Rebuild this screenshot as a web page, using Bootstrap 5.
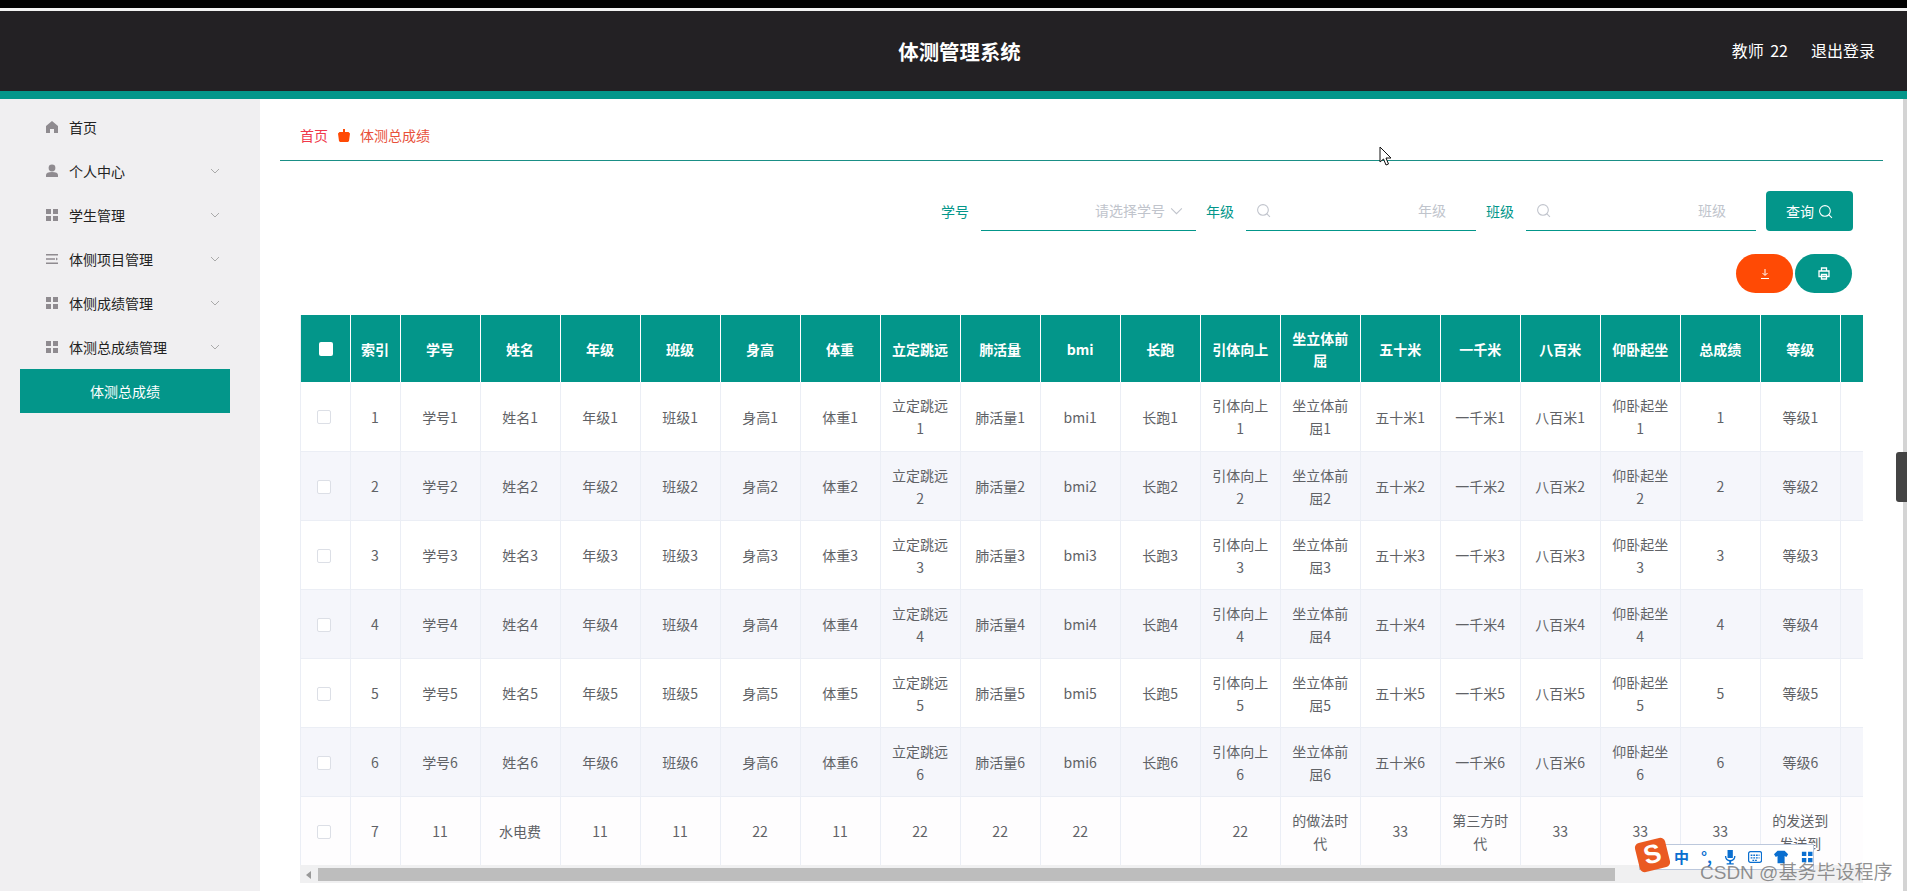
<!DOCTYPE html>
<html lang="zh">
<head>
<meta charset="utf-8">
<title>体测管理系统</title>
<link href="https://cdn.jsdelivr.net/npm/bootstrap@5.3.0/dist/css/bootstrap.min.css" rel="stylesheet">
<style>
html,body{height:891px;overflow:hidden;background:#fff}
body{font-family:"Noto Sans CJK SC","Liberation Sans",sans-serif;font-size:14px;color:#606266;position:relative}
.strip-top{height:8px;background:#000}
.strip-white{height:3px;background:#f2f2f2}
.head-bar{height:88px;background:#232124;border-bottom:8px solid #03968a;color:#fff;position:relative}
.head-title{font-size:20.400px;font-weight:700;line-height:80px;text-align:center;padding-left:12px}
.head-user{position:absolute;right:32px;top:0;line-height:79px;font-size:16px;gap:23px;word-spacing:3px}
.main-wrap{height:792px}
.side-col{width:260px;flex:none;background:#f0eff1;padding-top:6px;height:792px}
.side-item{height:44px;padding-left:45px;padding-right:39px;color:#222;font-size:14px}
.side-ic{width:14px;height:14px;margin-right:10px;flex:none}
.side-sub{margin:0 30px 0 20px;height:44px;background:#03968a;color:#fff;line-height:44px;text-align:center;font-size:14px}
.chev{width:12px;height:12px;margin-left:auto}
.body-col{flex:1;min-width:0;padding:0 0 0 20px}
.crumb-row{height:62px;margin-right:24px;border-bottom:1px solid #1a8f86;padding-left:20px;padding-top:11px;font-size:14px}
.crumb-a{color:#f0384a}
.crumb-b{color:#e8503a}
.crumb-ic{width:12px;height:13px;margin:0 10px}
.filter-row{margin-top:30px;height:40px;margin-right:54px;font-size:14px}
.f-label{color:#03968a;margin-right:12px}
.f-box{height:40px;border-bottom:1px solid #03968a;color:#c0c4cc;font-size:14px}
.f-one{width:215px;margin-right:10px;padding-right:12px}
.f-two{width:230px;padding:0 30px 0 10px;margin-right:10px}
.f-two:last-of-type{margin-right:0}
.f-ic{width:15px;height:15px}
.q-btn{width:87px;height:40px;margin-left:10px;background:#03968a;color:#fff;border:0;border-radius:4px;padding:0;font-size:14px}
.tool-row{margin-top:23px;height:39px;margin-right:55px;gap:2px}
.round-btn{width:57px;height:39px;border-radius:20px;border:0;padding:0}
.bg-orange{background:#ff4a05}
.bg-teal{background:#03968a}
.grid-wrap{margin:22px 0 0 20px;width:1563px;height:550px;overflow:hidden;border-left:1px solid #ebeef5}
.grid-tb{table-layout:fixed;width:1600px;margin:0;border-collapse:collapse;color:#606266}
.grid-tb th{background:#03968a;color:#fff;font-weight:700;font-size:14px;height:67px;text-align:center;vertical-align:middle;border:0;border-right:1px solid #fff;padding:0 10px;line-height:22px}
.grid-tb th.tight{padding:0}
.grid-tb td{height:69px;text-align:center;vertical-align:middle;border:0;border-right:1px solid #ebeef5;border-bottom:1px solid #ebeef5;padding:2px 10px 0;font-size:14px;line-height:23px;background:#fff;color:#606266}
.grid-tb td.tight{padding:2px 0 0}
.grid-tb tr.alt td{background:#f5f6fb}
.grid-tb tr.last td{background:#fefdfe}
.c-box{display:block;width:14px;height:14px;border:1px solid #dcdfe6;border-radius:2px;background:#fff;margin-left:16px}
.c-head{background:#fff;border:0;width:14px;height:14px;border-radius:2px;margin-left:18px;display:block}
.fake-bar{width:1563px;height:18px;background:#f0f0f1;position:absolute;left:300px;top:865px;margin:0;padding:3px 0 2px 18px}
.fake-arrow{position:absolute;left:6px;top:6px;width:0;height:0;border:4px solid transparent;border-right:5px solid #999;border-left:0}
.fake-thumb{display:block;width:1297px;height:13px;background:#bdbdbd}
.edge-line{position:absolute;right:0;top:99px;width:4px;height:792px;background:#d4d4d4}
.edge-tab{position:absolute;right:0;top:452px;width:11px;height:50px;background:#444;border-radius:3px 0 0 3px}
.ime{position:absolute;left:1639px;top:844px;width:175px;height:26px;background:#fff;border:1px solid #bcc8dc;color:#0a6fd0;font-size:15px;font-weight:700;padding-left:34px;gap:12px}
.ime-s{position:absolute;left:1637px;top:840px;width:31px;height:30px;background:#ea5a22;border-radius:5px;transform:rotate(-14deg);color:#fff;font-weight:700;font-size:26px;line-height:29px;text-align:center;font-family:"Liberation Sans",sans-serif}
.mark-text{position:absolute;left:1700px;top:861px;font-size:19px;color:rgba(90,90,90,.66);line-height:24px;white-space:nowrap;font-family:"Liberation Sans","Noto Sans CJK SC",sans-serif}
.ptr{position:absolute;left:1379px;top:146px;width:14px;height:20px}
</style>
</head>
<body>
<div class="strip-top"></div>
<div class="strip-white"></div>
<header class="head-bar">
  <div class="head-title">体测管理系统</div>
  <div class="head-user d-flex"><span>教师 22</span><span>退出登录</span></div>
</header>
<div class="main-wrap d-flex">
  <nav class="side-col">
    <div class="side-item d-flex align-items-center"><svg class="side-ic" viewBox="0 0 14 14"><path fill="#8f8b90" d="M7 1 1 6v7h4V9h4v4h4V6z"/></svg>首页</div>
    <div class="side-item d-flex align-items-center"><svg class="side-ic" viewBox="0 0 14 14"><circle cx="7" cy="4" r="3.400" fill="#8f8b90"/><path fill="#8f8b90" d="M1 13v-2c0-2 2-3 6-3s6 1 6 3v2z"/></svg>个人中心<svg class="chev" viewBox="0 0 12 12"><path fill="none" stroke="#aaa" d="M2 4l4 4 4-4"/></svg></div>
    <div class="side-item d-flex align-items-center"><svg class="side-ic" viewBox="0 0 14 14"><path fill="#8f8b90" d="M1 1h5v5H1zM8 1h5v5H8zM1 8h5v5H1zM8 8h5v5H8z"/></svg>学生管理<svg class="chev" viewBox="0 0 12 12"><path fill="none" stroke="#aaa" d="M2 4l4 4 4-4"/></svg></div>
    <div class="side-item d-flex align-items-center"><svg class="side-ic" viewBox="0 0 14 14"><path fill="#8f8b90" d="M1 2h12v1.500H1zM1 6.300h9v1.500H1zM1 10.500h12V12H1zM11 5.500l2 1.500-2 1.500z"/></svg>体侧项目管理<svg class="chev" viewBox="0 0 12 12"><path fill="none" stroke="#aaa" d="M2 4l4 4 4-4"/></svg></div>
    <div class="side-item d-flex align-items-center"><svg class="side-ic" viewBox="0 0 14 14"><path fill="#8f8b90" d="M1 1h5v5H1zM8 1h5v5H8zM1 8h5v5H1zM8 8h5v5H8z"/></svg>体侧成绩管理<svg class="chev" viewBox="0 0 12 12"><path fill="none" stroke="#aaa" d="M2 4l4 4 4-4"/></svg></div>
    <div class="side-item d-flex align-items-center"><svg class="side-ic" viewBox="0 0 14 14"><path fill="#8f8b90" d="M1 1h5v5H1zM8 1h5v5H8zM1 8h5v5H1zM8 8h5v5H8z"/></svg>体测总成绩管理<svg class="chev" viewBox="0 0 12 12"><path fill="none" stroke="#aaa" d="M2 4l4 4 4-4"/></svg></div>
    <div class="side-sub">体测总成绩</div>
  </nav>
  <main class="body-col">
    <div class="crumb-row d-flex align-items-center"><span class="crumb-a">首页</span><svg class="crumb-ic" viewBox="0 0 12 13"><path fill="#ff4a05" d="M5 0h2v3h3.500L12 4.500 11 12l-1 1H2l-1-1L0 4.500 1.500 3H5z"/></svg><span class="crumb-b">体测总成绩</span></div>
    <div class="filter-row d-flex justify-content-end align-items-center">
      <span class="f-label">学号</span>
      <div class="f-box f-one d-flex align-items-center justify-content-end"><span>请选择学号</span><svg class="f-ic ms-1" viewBox="0 0 14 14"><path fill="none" stroke="#c0c4cc" d="M2 5l5 5 5-5"/></svg></div>
      <span class="f-label">年级</span>
      <div class="f-box f-two d-flex align-items-center justify-content-between"><svg class="f-ic" viewBox="0 0 14 14"><circle cx="6.500" cy="6.500" r="5" fill="none" stroke="#c0c4cc"/><path stroke="#c0c4cc" d="M10 10l3 3"/></svg><span>年级</span></div>
      <span class="f-label">班级</span>
      <div class="f-box f-two d-flex align-items-center justify-content-between"><svg class="f-ic" viewBox="0 0 14 14"><circle cx="6.500" cy="6.500" r="5" fill="none" stroke="#c0c4cc"/><path stroke="#c0c4cc" d="M10 10l3 3"/></svg><span>班级</span></div>
      <button class="btn q-btn d-flex align-items-center justify-content-center">查询<svg class="f-ic ms-1" viewBox="0 0 14 14"><circle cx="6.500" cy="6.500" r="5" fill="none" stroke="#fff"/><path stroke="#fff" d="M10 10l3 3"/></svg></button>
    </div>
    <div class="tool-row d-flex justify-content-end">
      <button class="btn round-btn bg-orange d-flex align-items-center justify-content-center"><svg width="12" height="12" viewBox="0 0 12 12"><path fill="none" stroke="#fff" d="M6 1v6M3.500 5 6 7.500 8.500 5M2 10.500h8"/></svg></button>
      <button class="btn round-btn bg-teal d-flex align-items-center justify-content-center"><svg width="12" height="13" viewBox="0 0 12 13"><path fill="none" stroke="#fff" stroke-width="1.300" d="M3.500 4V1h5v3M1 4h10v5.500H1zM3.500 7.500h5V12h-5z"/></svg></button>
    </div>
    <div class="grid-wrap" id="gw"></div>
  </main>
</div>
<div class="fake-bar"><span class="fake-arrow"></span><span class="fake-thumb"></span></div>
<div class="edge-line"></div>
<div class="edge-tab"></div>
<svg class="ptr" viewBox="0 0 14 20"><path fill="#fff" stroke="#111" d="M1 1v15l3.500-3 2.500 6 2.500-1-2.500-6h5z"/></svg>
<div class="ime d-flex align-items-center"><span>中</span><span>°,</span>
  <svg width="14" height="18" viewBox="0 0 14 18"><path fill="#0a6fd0" d="M4 1h6v9H4zM1 8h1.500c0 3 2 4.500 4.500 4.500S11.500 11 11.500 8H13c0 3.500-2 5.500-5 6v2h3v1.500H3V16h3v-2c-3-.5-5-2.500-5-6z"/></svg>
  <svg width="16" height="14" viewBox="0 0 16 14"><rect x=".7" y="1" width="14.600" height="12" rx="2" fill="none" stroke="#0a6fd0" stroke-width="1.400"/><path stroke="#0a6fd0" stroke-width="1.500" stroke-dasharray="2 1" d="M3 5h10M3 8h10M5 10.800h6"/></svg>
  <svg width="16" height="14" viewBox="0 0 16 14"><path fill="#0a6fd0" d="M4 0h8l4 4-2 3-2-1v8H4V6L2 7 0 4z"/></svg>
  <svg width="14" height="14" viewBox="0 0 14 14"><path fill="#0a6fd0" d="M1 1h5v5H1zM8 1h5v5H8zM1 8h5v5H1zM8 8h5v5H8z"/></svg>
</div>
<div class="ime-s">S</div>
<div class="mark-text">CSDN @基务毕设程序</div>
<script src="https://cdn.jsdelivr.net/npm/bootstrap@5.3.0/dist/js/bootstrap.bundle.min.js"></script>
<script>
const heads=['索引','学号','姓名','年级','班级','身高','体重','立定跳远','肺活量','bmi','长跑','引体向上','坐立体前屈','五十米','一千米','八百米','仰卧起坐','总成绩','等级'];
const extra=['7','11','水电费','11','11','22','11','22','22','22','','22','的做法时代','33','第三方时代','33','33','33','的发送到发送到'];
let h='<table class="table grid-tb"><colgroup><col style="width:49px"><col style="width:50px">'+heads.slice(1).map(()=>'<col style="width:80px">').join('')+'<col style="width:60px"></colgroup><thead><tr><th class="tight"><span class="c-head"></span></th>'+heads.map((x,i)=>'<th'+(i==0?' class="tight"':'')+'>'+x+'</th>').join('')+'<th></th></tr></thead><tbody>';
for(let i=1;i<=6;i++){
 h+='<tr class="'+(i%2==0?'alt':'')+'"><td class="tight"><span class="c-box"></span></td><td>'+i+'</td>'+heads.slice(1).map(x=>'<td>'+(x=='总成绩'?i:x+i)+'</td>').join('')+'<td></td></tr>';
}
h+='<tr class="last"><td class="tight"><span class="c-box"></span></td>'+extra.map(x=>'<td>'+x+'</td>').join('')+'<td></td></tr></tbody></table>';
document.getElementById('gw').innerHTML=h;
</script>
</body>
</html>
